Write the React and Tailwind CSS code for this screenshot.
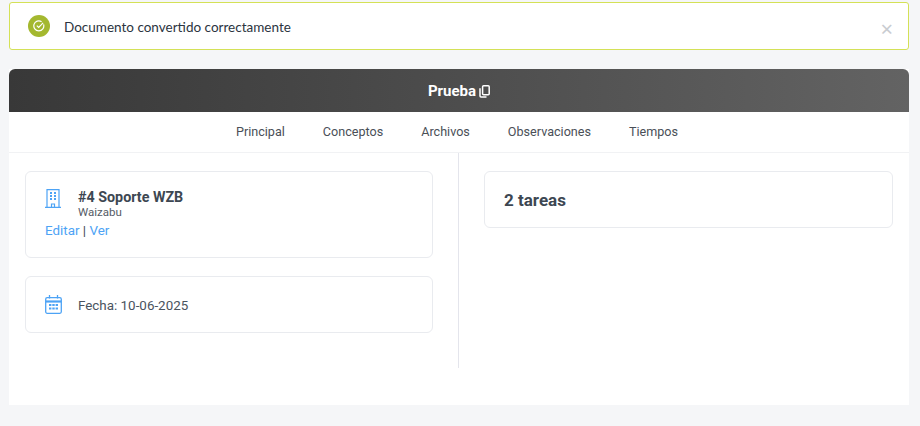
import React from 'react'

const tabs = ["Principal", "Conceptos", "Archivos", "Observaciones", "Tiempos"];

const BuildingIcon = () => (
    <svg width="16" height="19" viewBox="0 0 16 19" fill="none" stroke="#4da3f5" strokeWidth="1.2">
        <path d="M0 18.4h16M2 18.4V.6h12v17.8" />
        <path d="M6.5 18v-3h3v3" />
        <path d="M5 4h2M9 4h2M5 7h2M9 7h2M5 10h2M9 10h2" strokeWidth="1.8" />
    </svg>
);

const CalendarIcon = () => (
    <svg width="17" height="19" viewBox="0 0 17 19" fill="none" stroke="#4da3f5" strokeWidth="1.3">
        <rect x="0.7" y="2.7" width="15.6" height="15.6" rx="1.5" />
        <path d="M0.7 6.5h15.6" strokeWidth="2.2" />
        <path d="M4.5 0v3.5M12.5 0v3.5" />
        <path d="M4 10h2.4M7.3 10h2.4M10.6 10h2.4M4 13.5h2.4M7.3 13.5h2.4M10.6 13.5h2.4" strokeWidth="2.2" />
    </svg>
);

const App = () => {
    return (
        <div className="w-[920px] h-[426px] overflow-hidden bg-[#f5f6f8] pl-[9px] pr-[11px] pt-[2px] font-['Roboto',sans-serif] text-[#3d4752]">
            <div className="h-[48px] flex items-center bg-white border border-[#d4e157] rounded-[3px] pl-[18px] pr-[15px]">
                <div className="w-[22px] h-[22px] rounded-full bg-[#a4b82f] flex items-center justify-center">
                    <svg width="12" height="12" viewBox="0 0 12 12" fill="none" stroke="#fff" strokeWidth="1.2">
                        <path d="M10.6 4.4A5 5 0 1 1 8.6 1.7" />
                        <path d="M3.8 5.6l1.9 1.9 4.4-4.6" />
                    </svg>
                </div>
                <span className="ml-[14px] mt-[2px] text-[13.5px] font-['Lato',sans-serif] text-[#2b3440] flex-1">Documento convertido correctamente</span>
                <span className="text-[22px] leading-none text-[#c9ccd1] mt-[3px] font-['Noto_Sans',sans-serif]">×</span>
            </div>

            <div className="mt-[19px] h-[336px] bg-white flex flex-col">
                <div className="h-[43px] shrink-0 rounded-t-[6px] bg-gradient-to-r from-[#383838] to-[#636363] flex items-center justify-center gap-[3px] text-white">
                    <span className="text-[15px] font-bold mt-[2px]">Prueba</span>
                    <svg width="11" height="13" viewBox="0 0 11 13" fill="none" stroke="#fff" strokeWidth="1.5" className="mt-[2px]">
                        <rect x="3.6" y="0.8" width="6.6" height="9" rx="1" />
                        <path d="M1 3.2v7.8c0 .5.4 1 1 1h5.5" />
                    </svg>
                </div>

                <div className="h-[41px] shrink-0 border-b border-[#f1f2f4] flex items-center justify-center gap-[38px] pr-[4px] text-[12.6px] text-[#4a4f57]">
                    {tabs.map((tab) => (
                        <span key={tab}>{tab}</span>
                    ))}
                </div>

                <div className="flex items-start">
                    <div className="w-[450px] h-[215px] shrink-0 border-r border-[#e4e5ec] pl-[16px] pr-[25px] pt-[18px] flex flex-col gap-[18px]">
                        <div className="h-[87px] border border-[#e9ebef] rounded-[6px] pl-[19px] pt-[15px]">
                            <div className="flex">
                                <div className="w-[33px] pt-[2px]"><BuildingIcon /></div>
                                <div>
                                    <div className="text-[14.3px] leading-[20px] font-bold">#4 Soporte WZB</div>
                                    <div className="text-[11.5px] leading-[11px] text-[#555c66]">Waizabu</div>
                                </div>
                            </div>
                            <div className="text-[13.4px] leading-[18px] mt-[4px] text-[#4da3f5]">
                                Editar <span className="text-[#3d4752]">|</span> Ver
                            </div>
                        </div>
                        <div className="h-[57px] border border-[#e9ebef] rounded-[6px] pl-[19px] flex items-center">
                            <div className="w-[33px] flex items-center"><CalendarIcon /></div>
                            <span className="text-[13.4px] text-[#4a535e] mt-[3px]">Fecha: 10-06-2025</span>
                        </div>
                    </div>

                    <div className="flex-1 pl-[25px] pr-[16px] pt-[18px]">
                        <div className="h-[57px] border border-[#e9ebef] rounded-[6px] pl-[19px] flex items-center">
                            <span className="text-[17px] font-bold text-[#3d4752] mt-[2px]">2 tareas</span>
                        </div>
                    </div>
                </div>
            </div>
        </div>
    );
}

export default App
